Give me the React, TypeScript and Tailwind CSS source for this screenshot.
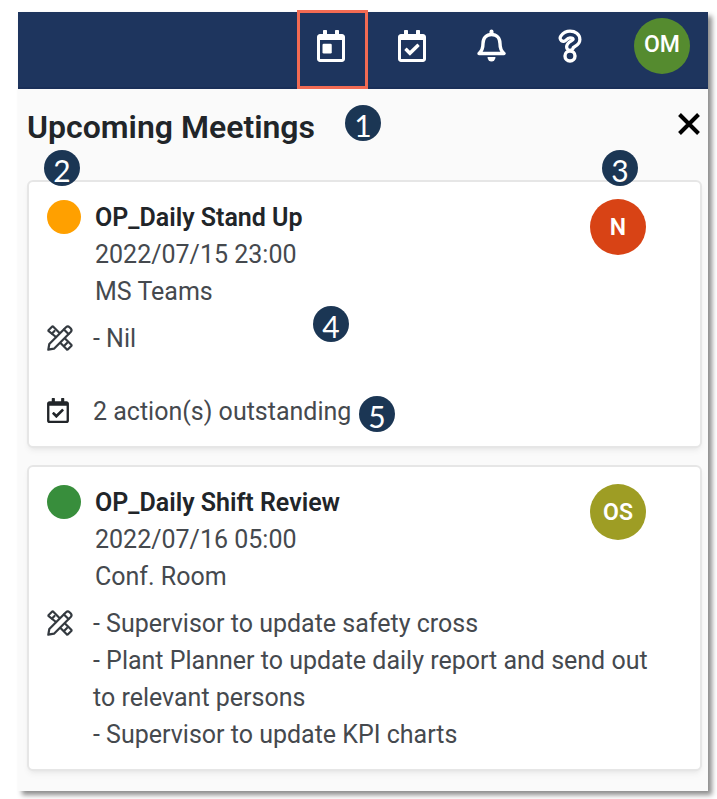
import React from 'react';
import { FaRegCalendarCheck } from 'react-icons/fa';

type Meeting = {
  title: string;
  time: string;
  place: string;
  dot: string;
  initials: string;
  avatar: string;
  notes: string[];
  actions?: string;
};

const meetings: Meeting[] = [
  {
    title: 'OP_Daily Stand Up',
    time: '2022/07/15 23:00',
    place: 'MS Teams',
    dot: 'bg-[#ffa000]',
    initials: 'N',
    avatar: 'bg-[#d84315]',
    notes: ['- Nil'],
    actions: '2 action(s) outstanding',
  },
  {
    title: 'OP_Daily Shift Review',
    time: '2022/07/16 05:00',
    place: 'Conf. Room',
    dot: 'bg-[#388e3c]',
    initials: 'OS',
    avatar: 'bg-[#9e9d24]',
    notes: [
      '- Supervisor to update safety cross',
      '- Plant Planner to update daily report and send out to relevant persons',
      '- Supervisor to update KPI charts',
    ],
  },
];

const CalendarDayIcon = () => (
  <svg viewBox="0 0 448 512" className="h-8 w-7" fill="currentColor" aria-hidden="true">
    <path d="M400 64h-48V12c0-6.6-5.4-12-12-12h-40c-6.6 0-12 5.4-12 12v52H160V12c0-6.6-5.4-12-12-12h-40c-6.6 0-12 5.4-12 12v52H48C21.5 64 0 85.5 0 112v352c0 26.5 21.5 48 48 48h352c26.5 0 48-21.5 48-48V112c0-26.5-21.5-48-48-48zm-6 400H54a6 6 0 0 1-6-6V160h352v298a6 6 0 0 1-6 6z" />
    <rect x="88" y="220" width="148" height="156" rx="20" />
  </svg>
);

const BellIcon = () => (
  <svg viewBox="0 0 29 33" className="h-[33px] w-[29px]" fill="none" aria-hidden="true">
    <path
      d="M2 24.5C4.5 22.5 6 20 6 14.5C6 9 9.5 5.5 14.5 5.5C19.5 5.5 23 9 23 14.5C23 20 24.5 22.5 27 24.5Z"
      stroke="currentColor"
      strokeWidth="3.4"
      strokeLinejoin="round"
    />
    <path d="M12.5 5V2.5A2 2 0 0 1 16.5 2.5V5Z" fill="currentColor" />
    <path d="M10.500 28H18.500A4 4.500 0 0 1 10.500 28Z" fill="currentColor" />
  </svg>
);

const QuestionIcon = () => (
  <svg viewBox="0 0 24 34" className="h-[34px] w-6" fill="none" aria-hidden="true">
    <path
      d="M5.5 9C7.5 6.5 9.5 5.5 12 5.5C16 5.5 18.5 7.5 18.5 10.5C18.5 15 12 14.5 12 18"
      stroke="currentColor"
      strokeWidth="10"
      strokeLinecap="round"
      strokeLinejoin="round"
    />
    <path
      d="M5.5 9C7.5 6.5 9.5 5.5 12 5.5C16 5.5 18.5 7.5 18.5 10.5C18.5 15 12 14.5 12 18"
      stroke="#1e355e"
      strokeWidth="3.5"
      strokeLinecap="round"
      strokeLinejoin="round"
    />
    <circle cx="12" cy="27" r="5" fill="#1e355e" stroke="currentColor" strokeWidth="3.4" />
  </svg>
);

const PencilRulerIcon = () => (
  <svg
    viewBox="0 0 26 26"
    className="h-[26px] w-[26px]"
    fill="none"
    stroke="currentColor"
    strokeWidth="2.2"
    strokeLinecap="round"
    strokeLinejoin="round"
    aria-hidden="true"
  >
    <path d="M9 12L1.7 6.2Q1.2 5.6 1.7 5L5 1.7Q5.7 1.2 6.3 1.7L12 7.5" />
    <path d="M14 18.5L19.7 24.3Q20.3 24.8 21 24.3L24.3 21Q24.8 20.3 24.3 19.7L18.5 14" />
    <path d="M5 8.5L7.5 6M17.5 20.5L20 18" />
    <path d="M1.3 24.7L2.3 19L19 2.3Q20.8 0.7 22.5 2.2L23.8 3.5Q25.3 5.2 23.7 7L7 23.7Z" />
    <path d="M17 4.5L21.5 9" />
  </svg>
);

const CloseIcon = () => (
  <svg viewBox="0 0 22 22" className="h-[22px] w-[22px]" stroke="currentColor" strokeWidth="4" aria-hidden="true">
    <path d="M1.5 1.5L20.5 20.5M20.5 1.5L1.5 20.5" />
  </svg>
);

const Callout = ({ value, className }: { value: number; className: string }) => (
  <span
    className={`absolute flex h-9 w-9 items-center justify-center rounded-full bg-[#1b3654] pt-1 font-['Lato',sans-serif] text-[30px] leading-none text-white ${className}`}
  >
    {value}
  </span>
);

const MeetingCard = ({ meeting }: { meeting: Meeting }) => (
  <article className="rounded-md border-2 border-[#e6e6e6] bg-white pt-[17px] pr-11 pb-4 pl-[18px] shadow-md shadow-black/5">
    <div className="flex items-start">
      <span className={`mt-px h-[34px] w-[34px] shrink-0 rounded-full ${meeting.dot}`}></span>
      <div className="ml-[14px] flex-1">
        <h2 className="font-semibold text-[#212529]">{meeting.title}</h2>
        <p>{meeting.time}</p>
        <p>{meeting.place}</p>
      </div>
      <div
        className={`mr-[10px] flex h-14 w-14 items-center justify-center rounded-full text-[23px] font-semibold text-white ${meeting.avatar}`}
      >
        {meeting.initials}
      </div>
    </div>
    <div className="mt-[10px] flex items-start">
      <span className="mt-[5px] w-[46px] shrink-0 text-[#343a40]">
        <PencilRulerIcon />
      </span>
      <div className="flex-1">
        {meeting.notes.map((note) => (
          <p key={note}>{note}</p>
        ))}
      </div>
    </div>
    {meeting.actions && (
      <div className="mt-9 flex items-start">
        <span className="mt-[5px] w-[46px] shrink-0 text-[#212529]">
          <FaRegCalendarCheck className="h-[25px] w-[22px]" />
        </span>
        <p>{meeting.actions}</p>
      </div>
    )}
  </article>
);

const App = () => {
  return (
    <div className="bg-white pt-3 pr-[9px] pb-[9px] pl-[18px] font-['Roboto',sans-serif]">
      <div className="bg-[#fafafa] shadow-[4px_4px_5px_rgba(0,0,0,0.45)]">
        <header className="flex h-[77px] items-center justify-end border-b-2 border-[#1a2f58] bg-[#1e355e] pr-[18px] text-white">
          <button
            type="button"
            aria-label="Upcoming meetings"
            className="-my-0.5 flex h-[79px] w-[71px] items-center justify-center border-3 border-[#f26b53] pr-1 pb-2"
          >
            <CalendarDayIcon />
          </button>
          <button type="button" aria-label="Actions" className="ml-[30px] pb-2">
            <FaRegCalendarCheck className="h-8 w-7" />
          </button>
          <button type="button" aria-label="Notifications" className="ml-[51px] pb-2">
            <BellIcon />
          </button>
          <button type="button" aria-label="Help" className="ml-[52px] pb-2">
            <QuestionIcon />
          </button>
          <button
            type="button"
            aria-label="Account"
            className="mb-2 ml-[52px] h-14 w-14 rounded-full bg-[#558b2f] text-[23px] font-medium"
          >
            OM
          </button>
        </header>

        <main className="relative pr-[6px] pb-5 pl-[9px]">
          <div className="flex h-[91px] items-start justify-between pt-[18px]">
            <h1 className="text-[32px] leading-10 font-semibold text-[#212529]">Upcoming Meetings</h1>
            <button type="button" aria-label="Close" className="mt-[6px] mr-[2px] text-black">
              <CloseIcon />
            </button>
          </div>

          <div className="space-y-[17px] text-[25px] leading-[37px] text-[#45494e]">
            {meetings.map((meeting) => (
              <MeetingCard key={meeting.title} meeting={meeting} />
            ))}
          </div>

          <Callout value={1} className="top-4 left-[327px]" />
          <Callout value={2} className="top-[61px] left-[26px]" />
          <Callout value={3} className="top-[61px] right-[70px]" />
          <Callout value={4} className="top-[217px] left-[295px]" />
          <Callout value={5} className="top-[307px] left-[341px]" />
        </main>
      </div>
    </div>
  );
};

export default App;
